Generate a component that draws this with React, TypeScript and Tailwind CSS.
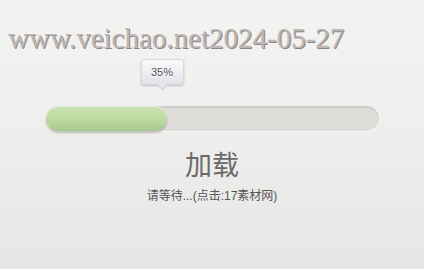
import React from "react";

export default function App() {
  return (
    <div className="w-[424px] h-[269px] overflow-hidden bg-gradient-to-b from-[#f3f3f2] via-[#eeeeec] to-[#e7e6e4] flex flex-col">
      <div className="pt-[23px] pl-[8px]">
        <div
          className="text-[29px] leading-[30px] font-normal text-[#bdb6b4] whitespace-nowrap [text-shadow:1px_1px_0_#8d8583]"
          style={{ fontFamily: '"Liberation Serif", serif' }}
        >
          www.veichao.net2024-05-27
        </div>
      </div>
      <div className="w-[333px] mx-auto">
        <div className="relative ml-[95px] mt-[6px] w-[43px] h-[26px] rounded-[3px] bg-gradient-to-b from-[#fafafb] to-[#e2e3e8] border border-[#d6d7dc] shadow-[0_1px_2px_rgba(0,0,0,0.2)] flex items-center justify-center">
          <span
            className="text-[11px] text-[#555] [text-shadow:0_1px_0_#fff]"
            style={{ fontFamily: '"Liberation Sans", Arial, sans-serif' }}
          >
            35%
          </span>
          <div className="absolute left-[17px] bottom-[-5px] w-[7px] h-[7px] rotate-45 bg-[#e3e4e8] border-r border-b border-[#cfd0d5]" />
        </div>
        <div className="mt-[21px] h-[25px] rounded-full bg-[#dedcd9] shadow-[inset_0_2px_2px_rgba(0,0,0,0.08),0_1px_0_#fafafa]">
          <div className="h-[25px] w-[121px] rounded-full bg-gradient-to-b from-[#c9e3b3] via-[#bddaa2] to-[#a9c98e] shadow-[0_2px_2px_rgba(0,0,0,0.22),inset_0_1px_0_rgba(255,255,255,0.5)]" />
        </div>
      </div>
      <div
        className="text-center mt-[18px] text-[27px] leading-[30px] text-[#6a6a6a]"
        style={{ fontFamily: '"Noto Sans CJK SC", "Liberation Sans", sans-serif' }}
      >
        加载
      </div>
      <div
        className="text-center mt-[9px] text-[12px] leading-[16px] text-[#555]"
        style={{ fontFamily: '"Liberation Sans", "Noto Sans CJK SC", sans-serif' }}
      >
        请等待...(点击:17素材网)
      </div>
    </div>
  );
}
